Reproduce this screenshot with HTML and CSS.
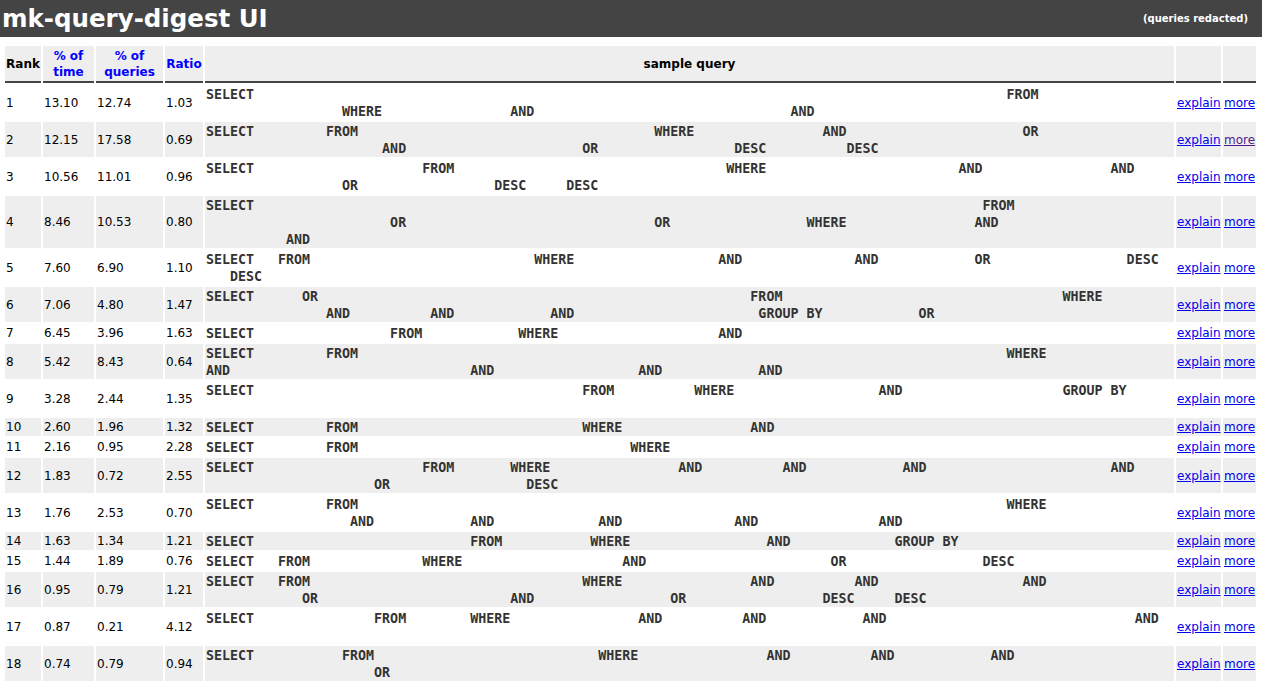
FILE: index.html
```html
<!DOCTYPE html>
<html>
<head>
<meta charset="utf-8">
<title>mk-query-digest UI</title>
<link rel="stylesheet" href="styles.css">
</head>
<body>
<div class="topbar">
  <h1 class="title">mk-query-digest UI</h1>
  <span class="note">(queries redacted)</span>
</div>
<table class="digest">
  <colgroup>
    <col class="c-rank"><col class="c-time"><col class="c-pq"><col class="c-ratio"><col class="c-sql"><col class="c-exp"><col class="c-more">
  </colgroup>
  <thead>
    <tr>
      <th class="plain">Rank</th>
      <th><a class="sort" href="#">% of time</a></th>
      <th><a class="sort" href="#">% of queries</a></th>
      <th><a class="sort" href="#">Ratio</a></th>
      <th class="plain">sample query</th>
      <th></th>
      <th></th>
    </tr>
  </thead>
  <tbody>
    <tr><td>1</td><td>13.10</td><td>12.74</td><td>1.03</td><td class="q"><div>SELECT                                                                                              FROM</div><div>                 WHERE                AND                                AND</div></td><td><a href="#">explain</a></td><td><a href="#">more</a></td></tr>
    <tr><td>2</td><td>12.15</td><td>17.58</td><td>0.69</td><td class="q"><div>SELECT         FROM                                     WHERE                AND                      OR</div><div>                      AND                      OR                 DESC          DESC</div></td><td><a href="#">explain</a></td><td><a class="visited" href="#">more</a></td></tr>
    <tr><td>3</td><td>10.56</td><td>11.01</td><td>0.96</td><td class="q"><div>SELECT                     FROM                                  WHERE                        AND                AND</div><div>                 OR                 DESC     DESC</div></td><td><a href="#">explain</a></td><td><a href="#">more</a></td></tr>
    <tr><td>4</td><td>8.46</td><td>10.53</td><td>0.80</td><td class="q"><div>SELECT                                                                                           FROM</div><div>                       OR                               OR                 WHERE                AND</div><div>          AND</div></td><td><a href="#">explain</a></td><td><a href="#">more</a></td></tr>
    <tr><td>5</td><td>7.60</td><td>6.90</td><td>1.10</td><td class="q"><div>SELECT   FROM                            WHERE                  AND              AND            OR                 DESC</div><div>   DESC</div></td><td><a href="#">explain</a></td><td><a href="#">more</a></td></tr>
    <tr><td>6</td><td>7.06</td><td>4.80</td><td>1.47</td><td class="q"><div>SELECT      OR                                                      FROM                                   WHERE</div><div>               AND          AND            AND                       GROUP BY            OR</div></td><td><a href="#">explain</a></td><td><a href="#">more</a></td></tr>
    <tr><td>7</td><td>6.45</td><td>3.96</td><td>1.63</td><td class="q"><div>SELECT                 FROM            WHERE                    AND</div></td><td><a href="#">explain</a></td><td><a href="#">more</a></td></tr>
    <tr><td>8</td><td>5.42</td><td>8.43</td><td>0.64</td><td class="q"><div>SELECT         FROM                                                                                 WHERE</div><div>AND                              AND                  AND            AND</div></td><td><a href="#">explain</a></td><td><a href="#">more</a></td></tr>
    <tr><td>9</td><td>3.28</td><td>2.44</td><td>1.35</td><td class="q"><div>SELECT                                         FROM          WHERE                  AND                    GROUP BY</div><div> </div></td><td><a href="#">explain</a></td><td><a href="#">more</a></td></tr>
    <tr><td>10</td><td>2.60</td><td>1.96</td><td>1.32</td><td class="q"><div>SELECT         FROM                            WHERE                AND</div></td><td><a href="#">explain</a></td><td><a href="#">more</a></td></tr>
    <tr><td>11</td><td>2.16</td><td>0.95</td><td>2.28</td><td class="q"><div>SELECT         FROM                                  WHERE</div></td><td><a href="#">explain</a></td><td><a href="#">more</a></td></tr>
    <tr><td>12</td><td>1.83</td><td>0.72</td><td>2.55</td><td class="q"><div>SELECT                     FROM       WHERE                AND          AND            AND                       AND</div><div>                     OR                 DESC</div></td><td><a href="#">explain</a></td><td><a href="#">more</a></td></tr>
    <tr><td>13</td><td>1.76</td><td>2.53</td><td>0.70</td><td class="q"><div>SELECT         FROM                                                                                 WHERE</div><div>                  AND            AND             AND              AND               AND</div></td><td><a href="#">explain</a></td><td><a href="#">more</a></td></tr>
    <tr><td>14</td><td>1.63</td><td>1.34</td><td>1.21</td><td class="q"><div>SELECT                           FROM           WHERE                 AND             GROUP BY</div></td><td><a href="#">explain</a></td><td><a href="#">more</a></td></tr>
    <tr><td>15</td><td>1.44</td><td>1.89</td><td>0.76</td><td class="q"><div>SELECT   FROM              WHERE                    AND                       OR                 DESC</div></td><td><a href="#">explain</a></td><td><a href="#">more</a></td></tr>
    <tr><td>16</td><td>0.95</td><td>0.79</td><td>1.21</td><td class="q"><div>SELECT   FROM                                  WHERE                AND          AND                  AND</div><div>            OR                        AND                 OR                 DESC     DESC</div></td><td><a href="#">explain</a></td><td><a href="#">more</a></td></tr>
    <tr><td>17</td><td>0.87</td><td>0.21</td><td>4.12</td><td class="q"><div>SELECT               FROM        WHERE                AND          AND            AND                               AND</div><div> </div></td><td><a href="#">explain</a></td><td><a href="#">more</a></td></tr>
    <tr><td>18</td><td>0.74</td><td>0.79</td><td>0.94</td><td class="q"><div>SELECT           FROM                            WHERE                AND          AND            AND</div><div>                     OR</div></td><td><a href="#">explain</a></td><td><a href="#">more</a></td></tr>
  </tbody>
</table>
</body>
</html>
```

FILE: styles.css
```css
html, body {
  margin: 0;
  padding: 0;
  background: #ffffff;
}

body {
  font-family: "DejaVu Sans", Verdana, sans-serif;
  font-size: 12px;
  color: #000;
}

.topbar {
  display: flex;
  align-items: center;
  justify-content: space-between;
  height: 37px;
  padding: 0 14px 0 2px;
  background: #444444;
  color: #ffffff;
}

.title {
  margin: 0;
  font-size: 24.5px;
  font-weight: bold;
  line-height: 37px;
}

.note {
  font-size: 10px;
  font-weight: bold;
}

.digest {
  table-layout: fixed;
  border-collapse: separate;
  border-spacing: 2px;
  width: calc(100% - 7px);
  margin: 7px 0 0 3px;
}

.c-rank { width: 36px; }
.c-time { width: 51px; }
.c-pq { width: 67px; }
.c-ratio { width: 38px; }
.c-exp { width: 45px; }
.c-more { width: 33px; }

.digest th,
.digest td {
  padding: 1px;
  font-size: 12px;
  line-height: 16px;
  vertical-align: middle;
  text-align: left;
  overflow: hidden;
}

.digest th {
  padding: 2px 1px 1px;
  background: #eeeeee;
  border-bottom: 2px solid #444444;
  font-weight: bold;
  text-align: center;
}

.sort {
  color: #0000ff;
  text-decoration: none;
}

.digest tbody tr:nth-child(even) td {
  background: #eeeeee;
}

.digest td.q {
  vertical-align: top;
  padding: 1px 0 0 1px;
  font-family: "DejaVu Sans Mono", "Liberation Mono", monospace;
  font-size: 13.3px;
  font-weight: bold;
  color: #333333;
}

.q div {
  white-space: pre;
  line-height: 17px;
}

.digest td a {
  color: #0000ee;
  text-decoration: underline;
}

.digest td a.visited {
  color: #551a8b;
}
```
